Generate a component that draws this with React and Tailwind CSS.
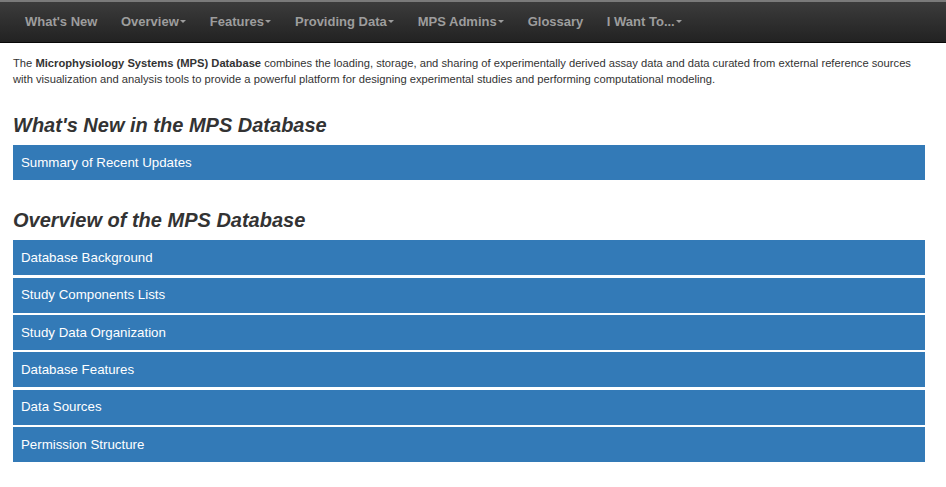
import React from 'react';

const navItems = [
    { label: "What's New" },
    { label: 'Overview', caret: true },
    { label: 'Features', caret: true },
    { label: 'Providing Data', caret: true },
    { label: 'MPS Admins', caret: true },
    { label: 'Glossary' },
    { label: 'I Want To...', caret: true },
];

const overview = [
    'Database Background',
    'Study Components Lists',
    'Study Data Organization',
    'Database Features',
    'Data Sources',
    'Permission Structure',
];

const Caret = () => (
    <span className="inline-block ml-[1.5px] mb-[3px] w-0 h-0 border-x-[3px] border-x-transparent border-t-[3px] border-t-[#9d9d9d] align-middle" />
);

const Panel = ({ children }) => (
    <div className="bg-[#337ab7] h-[35px] flex items-center px-2 text-white text-[13.3px]">{children}</div>
);

const App = () => {
    return (
        <div className="w-[946px] h-[487px] bg-white font-['Liberation_Sans',Arial,sans-serif] text-[#333] overflow-hidden">
            <nav className="h-[43px] border-t-2 border-t-[#7a7a7a] border-b border-b-[#080808] bg-gradient-to-b from-[#3c3c3c] to-[#222] flex items-center pl-[13.25px]">
                {navItems.map((item) => (
                    <div key={item.label} className="px-[11.75px] text-[13px] font-bold text-[#9d9d9d] leading-[20px]">
                        {item.label}
                        {item.caret && <Caret />}
                    </div>
                ))}
            </nav>
            <div className="ml-[13px] w-[912px]">
                <p className="mt-[13px] w-[902px] text-[11.2px] leading-[15.6px]">
                    The <b>Microphysiology Systems (MPS) Database</b> combines the loading, storage, and sharing of experimentally derived assay data and data curated from external reference sources with visualization and analysis tools to provide a powerful platform for designing experimental studies and performing computational modeling.
                </p>
                <h2 className="mt-[26px] text-[20px] leading-[24px] font-bold italic">What's New in the MPS Database</h2>
                <div className="mt-[8px]">
                    <Panel>Summary of Recent Updates</Panel>
                </div>
                <h2 className="mt-[28px] text-[20px] leading-[24px] font-bold italic">Overview of the MPS Database</h2>
                <div className="mt-[8px] flex flex-col gap-[2.4px]">
                    {overview.map((t) => (
                        <Panel key={t}>{t}</Panel>
                    ))}
                </div>
            </div>
        </div>
    );
};

export default App;
